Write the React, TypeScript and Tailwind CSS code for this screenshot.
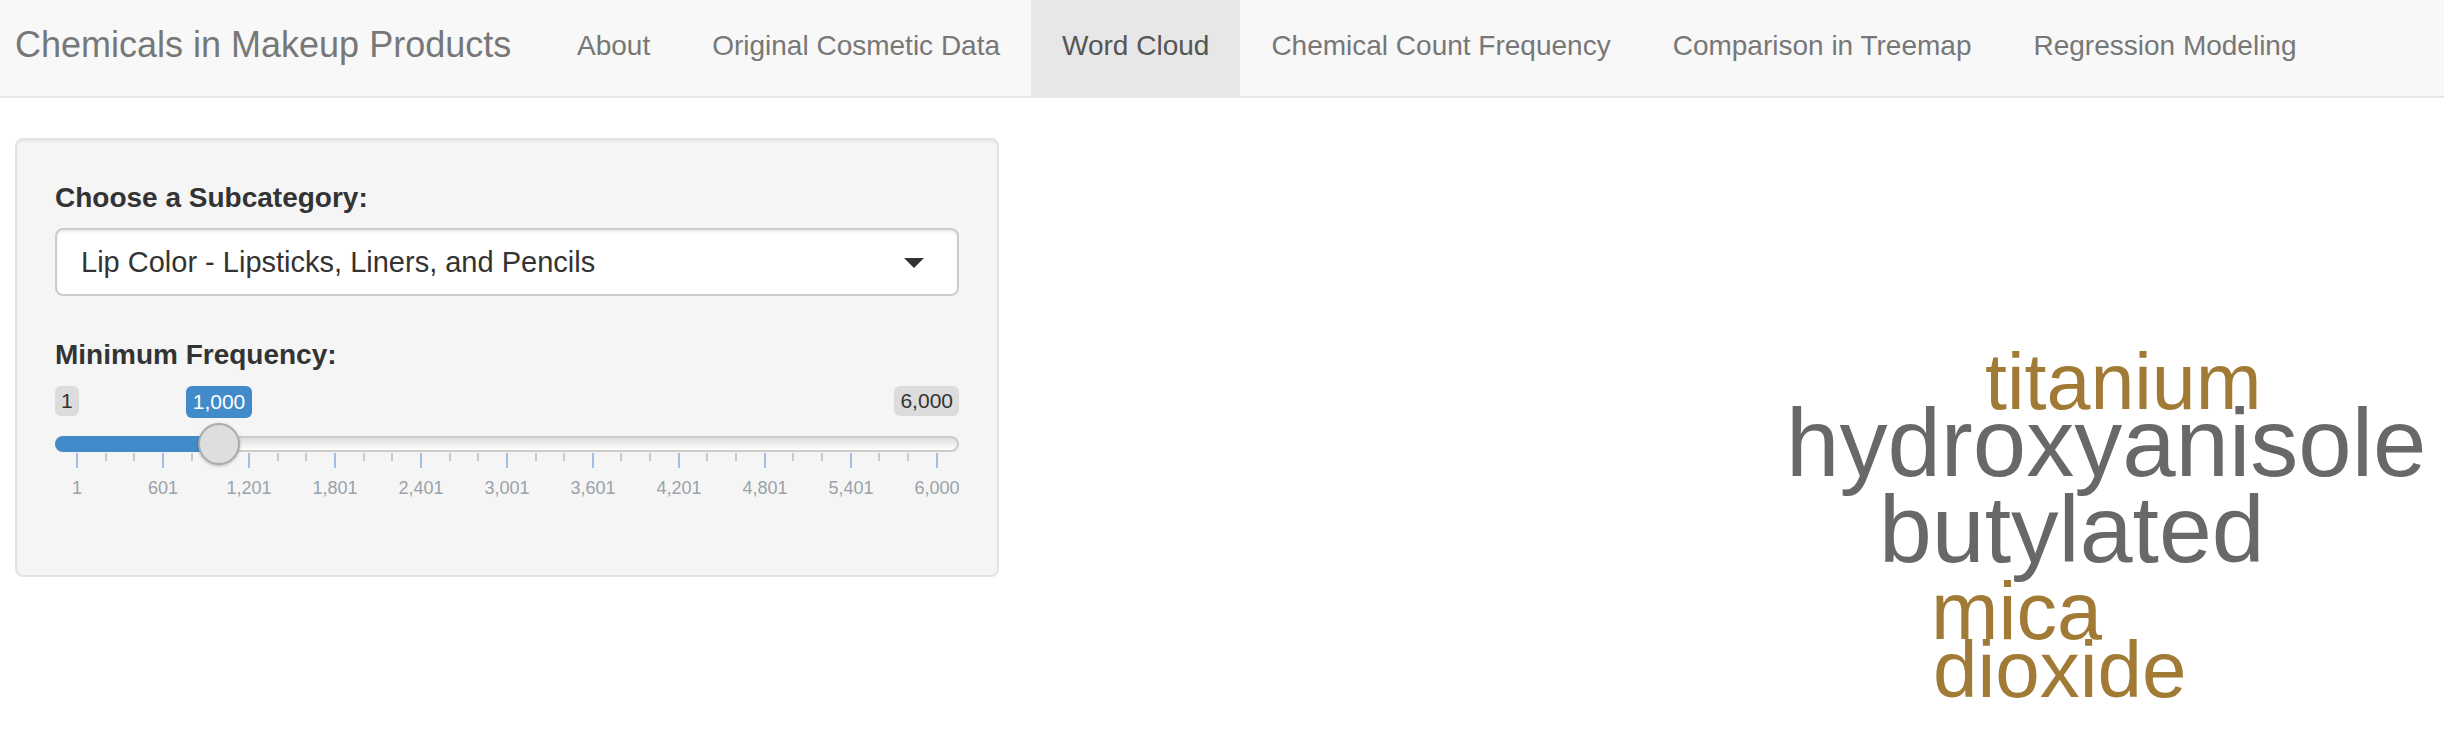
const tabs = [
  "About",
  "Original Cosmetic Data",
  "Word Cloud",
  "Chemical Count Frequency",
  "Comparison in Treemap",
  "Regression Modeling",
];

const gridLabels = ["1", "601", "1,201", "1,801", "2,401", "3,001", "3,601", "4,201", "4,801", "5,401", "6,000"];

// 10 intervals, each split in three -> 31 ticks, every third one is a major tick
const ticks = Array.from({ length: 31 }, (_, i) => i % 3 === 0);

function Navbar() {
  return (
    <nav className="flex h-[98px] items-start border-b-2 border-[#e7e7e7] bg-[#f8f8f8]">
      <div className="w-[546px] shrink-0 pl-[15px] pt-[25px] text-[36px] leading-[40px] text-[#777]">
        Chemicals in Makeup Products
      </div>
      <ul className="flex">
        {tabs.map((t) => (
          <li
            key={t}
            className={
              t === "Word Cloud"
                ? "h-[96px] bg-[#e7e7e7] px-[31px] pt-[26px] text-[28px] leading-[40px] text-[#555]"
                : "h-[96px] px-[31px] pt-[26px] text-[28px] leading-[40px] text-[#777]"
            }
          >
            {t}
          </li>
        ))}
      </ul>
    </nav>
  );
}

function Slider() {
  return (
    <div className="mt-[11px]">
      <div className="relative flex h-[32px] items-start justify-between">
        <span className="h-[30px] rounded-[6px] bg-[#dcdcdc] px-[6px] text-[21px] leading-[30px] text-[#333]">1</span>
        <span className="h-[30px] rounded-[6px] bg-[#dcdcdc] px-[6px] text-[21px] leading-[30px] text-[#333]">6,000</span>
        {/* value bubble above the handle */}
        <span className="absolute left-[131px] top-0 h-[32px] w-[66px] rounded-[6px] bg-[#428bca] text-center text-[21px] leading-[32px] text-white">
          1,000
        </span>
      </div>

      <div className="relative mt-[18px] h-[16px] rounded-full border-2 border-[#cccccc] bg-gradient-to-b from-[#dddddd] to-white">
        <div className="absolute -left-[2px] -top-[2px] h-[16px] w-[166px] rounded-l-full bg-[#428bca]" />
        <div className="absolute left-[141px] -top-[15px] h-[42px] w-[42px] rounded-full border-2 border-[#ababab] bg-[#dedede] shadow-[0_1px_3px_rgba(0,0,0,0.25)]" />
      </div>

      <div className="mx-[21px] mt-[1px] flex items-start justify-between">
        {ticks.map((major, i) =>
          major ? (
            <span key={i} className="h-[15px] w-[2px] bg-[#9fc0e0]" />
          ) : (
            <span key={i} className="h-[8px] w-[2px] bg-[#c9c9c9]" />
          )
        )}
      </div>

      <div className="mx-[22px] mt-[11px] flex justify-between">
        {gridLabels.map((label) => (
          <span key={label} className="flex w-0 justify-center">
            <span className="whitespace-nowrap text-[18px] leading-[18px] text-[#9aa2aa]">{label}</span>
          </span>
        ))}
      </div>
    </div>
  );
}

function Sidebar() {
  return (
    <div className="w-[984px] shrink-0 rounded-[8px] border-2 border-[#e3e3e3] bg-[#f5f5f5] p-[38px] shadow-[inset_0_2px_2px_rgba(0,0,0,0.05)]">
      <label className="block text-[28px] font-bold leading-[40px] text-[#333]">Choose a Subcategory:</label>
      <div className="mt-[10px] flex h-[68px] items-center justify-between rounded-[8px] border-2 border-[#cccccc] bg-white pl-[24px] pr-[33px] pt-[2px] shadow-[inset_0_2px_2px_rgba(0,0,0,0.08)]">
        <span className="text-[29px] text-[#333]">Lip Color - Lipsticks, Liners, and Pencils</span>
        <span className="h-0 w-0 border-x-[10px] border-t-[10px] border-x-transparent border-t-[#333]" />
      </div>

      <label className="mt-[39px] block text-[28px] font-bold leading-[40px] text-[#333]">Minimum Frequency:</label>
      <Slider />
      <div className="h-[40px]" />
    </div>
  );
}

const words = [
  { text: "titanium", size: 79, left: 956, top: 204, color: "text-[#a17a36]" },
  { text: "hydroxyanisole", size: 96, left: 757, top: 257, color: "text-[#686868]" },
  { text: "butylated", size: 95, left: 850, top: 344, color: "text-[#686868]" },
  { text: "mica", size: 81, left: 902, top: 433, color: "text-[#a17a36]" },
  { text: "dioxide", size: 80, left: 904, top: 492, color: "text-[#a17a36]" },
];

function WordCloud() {
  return (
    <div className="relative ml-[30px] h-[600px] flex-1">
      {words.map((w) => (
        <span
          key={w.text}
          className={`absolute whitespace-nowrap leading-none ${w.color}`}
          style={{ left: w.left, top: w.top, fontSize: w.size }}
        >
          {w.text}
        </span>
      ))}
    </div>
  );
}

export default function App() {
  return (
    <div className="min-h-screen bg-white font-['Liberation_Sans',Arial,sans-serif]">
      <Navbar />
      <main className="flex items-start px-[15px] pt-[40px]">
        <Sidebar />
        <WordCloud />
      </main>
    </div>
  );
}
